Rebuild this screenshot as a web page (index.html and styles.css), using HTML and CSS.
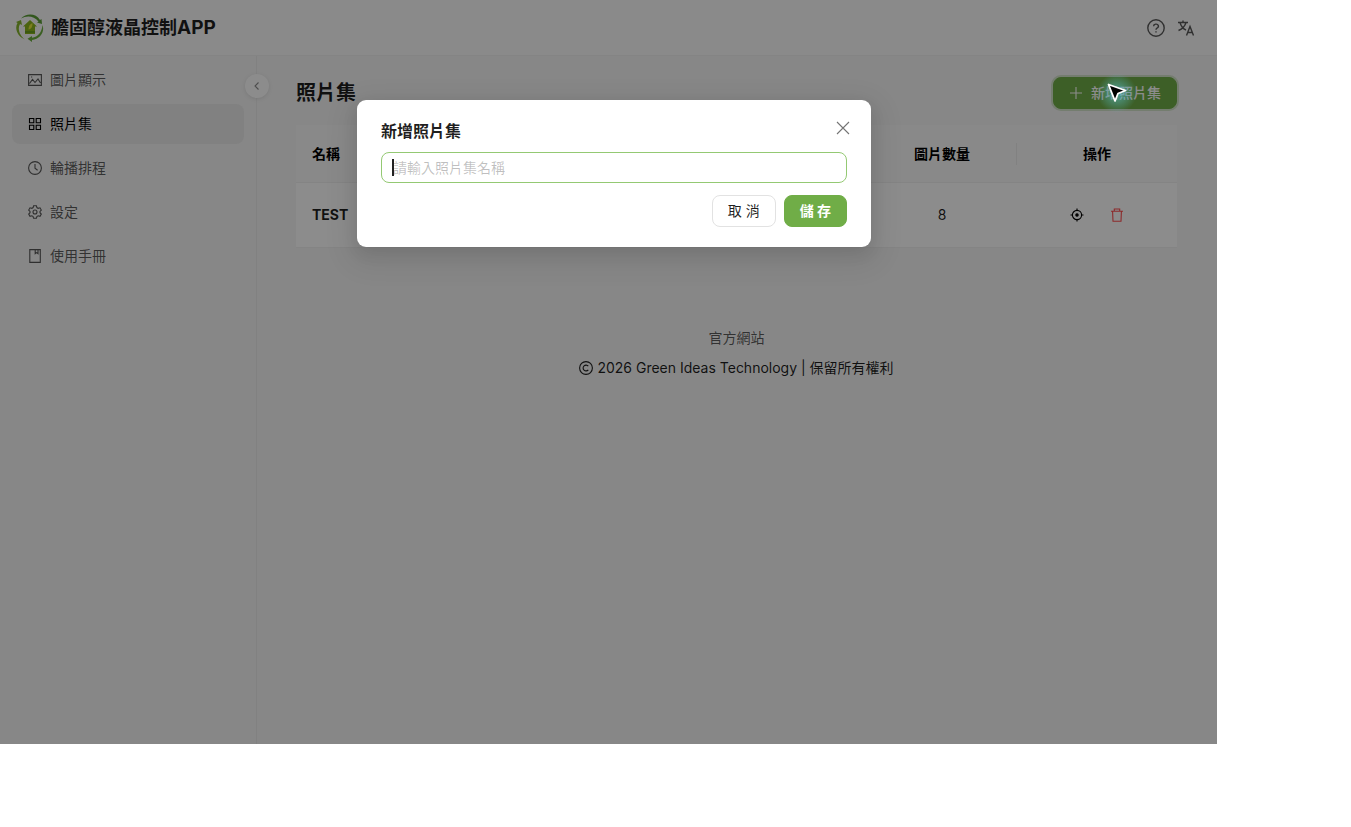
FILE: index.html
```
<!DOCTYPE html>
<html lang="zh-Hant">
<head>
    <meta charset="UTF-8">
    <meta name="viewport" content="width=device-width, initial-scale=1.0">
    <title>膽固醇液晶控制APP</title>
    <link rel="stylesheet" href="styles.css">
</head>
<body>
    <div class="app">
        <header class="header">
            <svg class="logo" viewBox="0 0 28 28">
                <path d="M5 4.500C10 -1 20 -1 24 6L25.500 5L26 10L21 8.500L22.500 7.500C18 2 11 1 5 4.500Z" fill="#5b9e36"/>
                <path d="M26.500 11C29 18 24 25 16 26L16 28L11.500 24.800L16 22V23.800C22 23 26 18 26.500 11Z" fill="#6cae3e"/>
                <path d="M9 25.500C2 23 -2 15 1.500 9L0 8L5 6L6 11L4 10C1 15 4 22 9 25.500Z" fill="#86b52e"/>
                <path d="M14 6L21 12.500H19V20H9V12.500H7Z" fill="#8ab51c"/>
                <path d="M12.500 15.500C12.500 12 14 10 16.500 9C16.500 12.500 15.500 15 12.500 15.500Z" fill="#e2e53c"/>
                <path d="M9 17.500h10v1H9z" fill="#4f8b25"/>
            </svg>
            <h1 class="brand">膽固醇液晶控制<span class="brand-latin">APP</span></h1>
            <div class="header-actions">
                <button class="icon-btn" aria-label="說明">
                    <svg class="icon-lg" viewBox="0 0 18 18"><circle cx="9" cy="9" r="8.200"/><path d="M6.600 7.200a2.400 2.100 0 1 1 3.400 1.900q-1 .5-1 1.700M9 12.200v1.200"/></svg>
                </button>
                <button class="icon-btn" aria-label="語言">
                    <svg class="icon-lg" viewBox="0 0 18 18"><path d="M1 3.500h10M6 1.500v2M3 3.500q1.500 5.500 6 7.500M9 3.500Q7.500 9 1.500 11.500M9.500 16.500l3.500-9 3.500 9M10.800 13.500h4.500"/></svg>
                </button>
            </div>
        </header>

        <div class="body">
            <aside class="sidebar">
                <nav class="menu">
                    <a class="menu-item" href="#">
                        <svg class="icon" viewBox="0 0 14 14"><path d="M.6 1.600h12.800v10.800H.6zM1.500 10.500l3-4 2.500 3 3-3.500 2.500 4M3 4h1.200"/></svg>圖片顯示
                    </a>
                    <a class="menu-item active" href="#">
                        <svg class="icon" viewBox="0 0 14 14"><path d="M1.500 1.500h4.300v4.300H1.500zM8.200 1.500h4.300v4.300H8.200zM1.500 8.200h4.300v4.300H1.500zM8.200 8.200h4.300v4.300H8.200z"/></svg>照片集
                    </a>
                    <a class="menu-item" href="#">
                        <svg class="icon" viewBox="0 0 14 14"><circle cx="7" cy="7" r="6.400"/><path d="M7 3v4.300l2.600 1.900"/></svg>輪播排程
                    </a>
                    <a class="menu-item" href="#">
                        <svg class="icon" viewBox="0 0 14 14"><path d="M5.600.8h2.800l.5 1.800 1.200.7 1.900-.5 1.300 2.300-1.300 1.300v1.300l1.300 1.300-1.300 2.300-1.900-.5-1.200.7-.5 1.800H5.600l-.5-1.800-1.200-.7-1.900.5L.7 9l1.300-1.300V6.400L.7 5.100 2 2.800l1.900.5 1.200-.7z"/><circle cx="7" cy="7" r="2"/></svg>設定
                    </a>
                    <a class="menu-item" href="#">
                        <svg class="icon" viewBox="0 0 14 14"><path d="M1.800.6h10.500v12.800H1.800zM7.200.6v4l1.400-1 1.400 1v-4"/></svg>使用手冊
                    </a>
                </nav>
                <button class="collapse" aria-label="收合選單">
                    <svg class="icon-sm" viewBox="0 0 10 10"><path d="M6.500 1.500L3 5l3.500 3.500"/></svg>
                </button>
            </aside>

            <main class="content">
                <div class="page-head">
                    <h2 class="page-title">照片集</h2>
                    <button class="btn primary add">
                        <svg class="icon" viewBox="0 0 14 14"><path d="M7 1v12M1 7h12"/></svg>新增照片集
                    </button>
                </div>
                <table class="table">
                    <thead>
                        <tr>
                            <th class="col-name">名稱</th>
                            <th class="col-count">圖片數量</th>
                            <th class="col-action">操作</th>
                        </tr>
                    </thead>
                    <tbody>
                        <tr>
                            <td class="col-name">TEST</td>
                            <td class="col-count">8</td>
                            <td class="col-action">
                                <div class="row-actions">
                                    <button class="icon-btn dark" aria-label="定位">
                                        <svg class="icon" viewBox="0 0 14 14"><circle cx="7" cy="7" r="4.600"/><circle cx="7" cy="7" r="1.200" fill="currentColor"/><path d="M7 .5v2M7 11.500v2M.5 7h2M11.500 7h2"/></svg>
                                    </button>
                                    <button class="icon-btn danger" aria-label="刪除">
                                        <svg class="icon" viewBox="0 0 14 14"><path d="M1 3.200h12M4.300 3V1h5.400v2M2.600 3.400l.4 9.900h8l.4-9.900"/></svg>
                                    </button>
                                </div>
                            </td>
                        </tr>
                    </tbody>
                </table>
                <footer class="footer">
                    <a class="footer-link" href="#">官方網站</a>
                    <p class="copyright">
                        <svg class="icon" viewBox="0 0 14 14"><circle cx="7" cy="7" r="6.400"/><path d="M9.300 5.200a2.900 2.900 0 1 0 0 3.600"/></svg>
                        2026 Green Ideas Technology | 保留所有權利
                    </p>
                </footer>
            </main>
        </div>

        <div class="mask">
            <form class="modal" role="dialog" aria-labelledby="modalTitle">
                <div class="modal-head">
                    <label class="modal-title" id="modalTitle" for="albumName">新增照片集</label>
                    <button type="button" class="close" aria-label="關閉">
                        <svg class="icon" viewBox="0 0 14 14"><path d="M1 1l12 12M13 1l-12 12"/></svg>
                    </button>
                </div>
                <div class="field">
                    <input class="input" type="text" id="albumName" placeholder="請輸入照片集名稱">
                    <span class="caret"></span>
                </div>
                <div class="modal-foot">
                    <button type="button" class="btn">取 消</button>
                    <button type="button" class="btn primary save">儲 存</button>
                </div>
            </form>
        </div>

        <div class="pointer">
            <svg class="pointer-arrow" viewBox="0 0 20 20"><path d="M1.500 1.500L18.500 7.500L11 10.500L8 18Z" fill="#000" stroke="#fff" stroke-width="1.800" stroke-linejoin="round"/></svg>
        </div>
    </div>
</body>
</html>
```
FILE: styles.css
```
* {
    box-sizing: border-box;
}
body {
    margin: 0;
    padding: 0 134px 83px 0;
    background: #fff;
    color: rgba(0, 0, 0, 0.88);
    font-family: Inter, "Noto Sans CJK TC", sans-serif;
    font-size: 14px;
    line-height: 22px;
}
h1, h2, p {
    margin: 0;
}
button, input {
    font: inherit;
}
a {
    color: inherit;
    text-decoration: none;
}
svg {
    display: block;
    flex: none;
    fill: none;
    stroke: currentColor;
    stroke-width: 1.1;
}
.icon {
    width: 14px;
    height: 14px;
}
.icon-lg {
    width: 18px;
    height: 18px;
    stroke-width: 1.4;
}
.icon-sm {
    width: 10px;
    height: 10px;
}

/* layout */
.app {
    position: relative;
    display: flex;
    flex-direction: column;
    min-height: calc(100vh - 83px);
    background: #f6f6f6;
}
.header {
    display: flex;
    align-items: center;
    gap: 7px;
    height: 56px;
    padding: 0 16px;
    background: #fcfcfc;
    border-bottom: 1px solid #f0f0f0;
}
.logo {
    width: 28px;
    height: 28px;
    stroke: none;
}
.brand {
    font-size: 18px;
    font-weight: 700;
}
.brand-latin {
    font-size: 19px;
}
.header-actions {
    display: flex;
    margin-left: auto;
}
.icon-btn {
    display: flex;
    align-items: center;
    justify-content: center;
    width: 30px;
    height: 32px;
    padding: 0;
    border: none;
    background: none;
    color: rgba(0, 0, 0, 0.65);
    cursor: pointer;
}
.body {
    display: flex;
    flex: 1;
}

/* sidebar */
.sidebar {
    position: relative;
    width: 257px;
    padding: 4px 12px;
    border-right: 1px solid #ececec;
}
.menu {
    display: flex;
    flex-direction: column;
    gap: 4px;
}
.menu-item {
    display: flex;
    align-items: center;
    gap: 8px;
    height: 40px;
    padding: 0 16px;
    border-radius: 8px;
    color: rgba(0, 0, 0, 0.65);
}
.menu-item.active {
    background: #ebebeb;
    color: #000;
}
.collapse {
    position: absolute;
    top: 18px;
    right: -13px;
    display: flex;
    align-items: center;
    justify-content: center;
    width: 24px;
    height: 24px;
    padding: 0;
    border: none;
    border-radius: 50%;
    background: #fff;
    color: rgba(0, 0, 0, 0.45);
    box-shadow: 0 1px 4px rgba(0, 0, 0, 0.1);
}

/* content */
.content {
    flex: 1;
    padding: 21px 40px 20px 39px;
}
.page-head {
    display: flex;
    align-items: center;
    justify-content: space-between;
    margin-bottom: 16px;
}
.page-title {
    font-size: 20px;
    font-weight: 700;
}
.btn {
    display: flex;
    align-items: center;
    gap: 8px;
    height: 32px;
    padding: 0 15px;
    border: 1px solid #e2e2e2;
    border-radius: 8px;
    background: #fff;
    color: rgba(0, 0, 0, 0.88);
    cursor: pointer;
}
.primary {
    border-color: #70ad47;
    background: #70ad47;
    color: #fff;
    font-weight: 500;
}
.add {
    box-shadow: 0 0 0 2px rgba(112, 173, 71, 0.25);
}
.table {
    width: 100%;
    border-spacing: 0;
    table-layout: fixed;
}
.table th,
.table td {
    padding: 16px;
    border-bottom: 1px solid #f0f0f0;
    text-align: center;
}
.table th {
    position: relative;
    height: 58px;
    background: #fafafa;
    color: #000;
    font-weight: 700;
}
.table td {
    background: #fff;
}
.table .col-name {
    text-align: left;
    font-weight: 700;
}
.col-count {
    width: 150px;
}
.col-action {
    width: 160px;
}
th.col-count::after {
    content: "";
    position: absolute;
    top: 18px;
    right: 0;
    width: 1px;
    height: 22px;
    background: #ececec;
}
.row-actions {
    display: flex;
    justify-content: center;
    gap: 10px;
}
.dark {
    color: #000;
}
.danger {
    color: #ff4d4f;
}
.footer {
    display: flex;
    flex-direction: column;
    align-items: center;
    gap: 8px;
    padding-top: 79px;
}
.footer-link {
    color: rgba(0, 0, 0, 0.65);
}
.copyright {
    display: flex;
    align-items: center;
    gap: 4px;
    color: rgba(0, 0, 0, 0.88);
}

/* dialog */
.mask {
    position: absolute;
    inset: 0;
    display: flex;
    justify-content: center;
    align-items: flex-start;
    padding: 100px 0 0 11px;
    background: rgba(0, 0, 0, 0.45);
}
.modal {
    width: 514px;
    padding: 20px 24px;
    border-radius: 9px;
    background: #fff;
    box-shadow: 0 6px 16px rgba(0, 0, 0, 0.08), 0 9px 28px 8px rgba(0, 0, 0, 0.08);
}
.modal-head {
    display: flex;
    justify-content: space-between;
    margin-bottom: 10px;
}
.modal-title {
    font-size: 16px;
    font-weight: 700;
}
.close {
    height: 16px;
    margin-right: -3px;
    padding: 0;
    border: none;
    background: none;
    color: rgba(0, 0, 0, 0.55);
    cursor: pointer;
}
.field {
    position: relative;
    margin-bottom: 12px;
}
.input {
    display: block;
    width: 100%;
    height: 31px;
    padding: 0 11px;
    border: 1px solid #94c973;
    border-radius: 8px;
    outline: none;
    background: #fff;
}
.input::placeholder {
    color: rgba(0, 0, 0, 0.25);
}
.caret {
    position: absolute;
    top: 7px;
    left: 11px;
    width: 2px;
    height: 17px;
    background: #222;
}
.modal-foot {
    display: flex;
    justify-content: flex-end;
    gap: 8px;
}
.save {
    font-weight: 700;
}

/* pointer highlight */
.pointer {
    position: absolute;
    top: 73px;
    right: 80px;
    display: flex;
    align-items: center;
    justify-content: center;
    width: 40px;
    height: 40px;
    background: radial-gradient(circle, rgba(90, 190, 200, 0.7), rgba(90, 190, 200, 0) 70%);
}
.pointer-arrow {
    width: 20px;
    height: 20px;
}
```
